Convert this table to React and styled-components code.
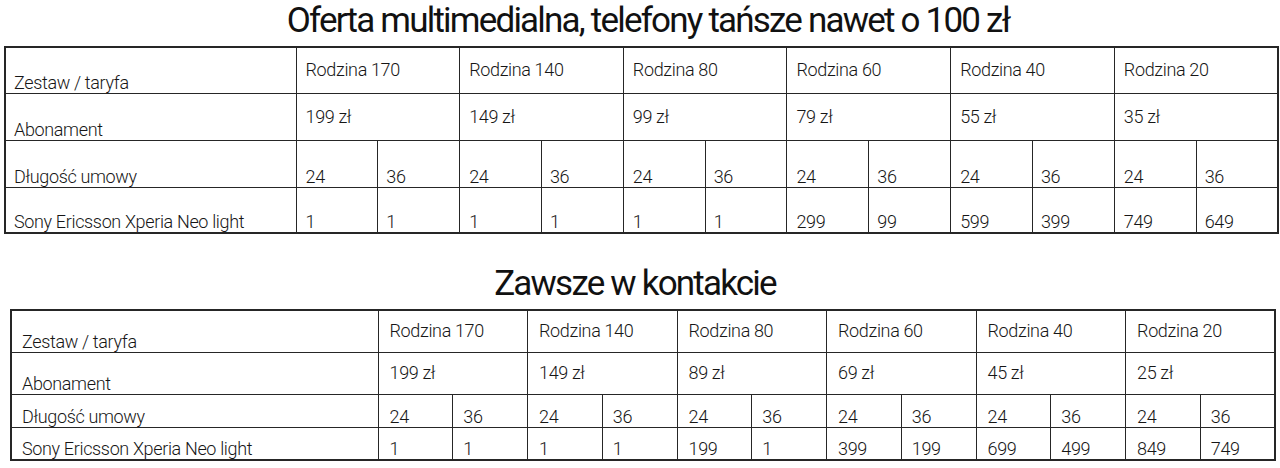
import React from 'react';
import styled, { createGlobalStyle } from 'styled-components';

const GlobalStyle = createGlobalStyle`
  html, body {
    margin: 0;
    padding: 0;
    background: #fff;
  }
  body {
    font-family: Roboto, 'Liberation Sans', Arial, sans-serif;
    color: #1a1a1a;
  }
`;

const Page = styled.div`
  width: 1280px;
  height: 468px;
  overflow: hidden;
  display: flex;
  flex-direction: column;
`;

const Section = styled.section`
  display: flex;
  flex-direction: column;
  padding-left: ${(p) => p.left}px;
  padding-top: ${(p) => p.top}px;
`;

const Title = styled.h2`
  margin: 0;
  height: ${(p) => p.h}px;
  font-family: Roboto, 'Liberation Sans', Arial, sans-serif;
  font-weight: 400;
  font-size: 35px;
  line-height: ${(p) => p.h - 4}px;
  letter-spacing: -1.8px;
  text-align: center;
  color: #111;
  transform: translateX(${(p) => p.shift}px);
`;

const Table = styled.table`
  width: ${(p) => p.width}px;
  border-collapse: collapse;
  table-layout: fixed;
  border: 2px solid #262626;
  font-size: 18px;
  font-weight: 300;
  letter-spacing: -0.35px;
  color: #161616;
`;

const Row = styled.tr`
  height: ${(p) => p.h}px;
`;

const Cell = styled.td`
  border: 1.5px solid #262626;
  padding: 0 0 ${(p) => (p.valign === 'bottom' ? 0 : 0)}px ${(p) => p.pad}px;
  vertical-align: ${(p) => p.valign};
  text-align: left;
  white-space: nowrap;
  overflow: hidden;
  line-height: 20px;
`;

const Label = styled(Cell)`
  vertical-align: bottom;
`;

const Pad = styled.div`
  padding-top: ${(p) => p.top}px;
`;

const groups = ['Rodzina 170', 'Rodzina 140', 'Rodzina 80', 'Rodzina 60', 'Rodzina 40', 'Rodzina 20'];

const tables = [
  {
    title: 'Oferta multimedialna, telefony tańsze nawet o 100 zł',
    titleH: 46,
    titleShift: 10,
    top: 0,
    left: 4,
    width: 1273,
    labelW: 291,
    pad: 8,
    rows: [46, 47, 47, 46],
    align: 'top',
    headPad: [12, 13],
    prices: ['199 zł', '149 zł', '99 zł', '79 zł', '55 zł', '35 zł'],
    phone: ['1', '1', '1', '1', '1', '1', '299', '99', '599', '399', '749', '649'],
  },
  {
    title: 'Zawsze w kontakcie',
    titleH: 46,
    titleShift: 0,
    top: 29,
    left: 10,
    width: 1264,
    labelW: 367,
    pad: 10,
    rows: [42, 42, 33, 33],
    align: 'middle',
    headPad: [0, 0],
    prices: ['199 zł', '149 zł', '89 zł', '69 zł', '45 zł', '25 zł'],
    phone: ['1', '1', '1', '1', '199', '1', '399', '199', '699', '499', '849', '749'],
  },
];

const PriceTable = ({ t }) => {
  const half = (t.width - t.labelW) / 12;
  return (
    <Section top={t.top} left={t.left}>
      <Title h={t.titleH} shift={t.titleShift - t.left}>
        {t.title}
      </Title>
      <Table width={t.width}>
        <colgroup>
          <col style={{ width: t.labelW }} />
          {groups.flatMap((g) => [
            <col key={g + 'a'} style={{ width: half }} />,
            <col key={g + 'b'} style={{ width: half }} />,
          ])}
        </colgroup>
        <tbody>
          <Row h={t.rows[0]}>
            <Label pad={t.pad}>Zestaw / taryfa</Label>
            {groups.map((g) => (
              <Cell key={g} colSpan={2} pad={t.pad + 1} valign={t.align}>
                <Pad top={t.headPad[0]}>{g}</Pad>
              </Cell>
            ))}
          </Row>
          <Row h={t.rows[1]}>
            <Label pad={t.pad}>Abonament</Label>
            {t.prices.map((p, i) => (
              <Cell key={i} colSpan={2} pad={t.pad + 1} valign={t.align}>
                <Pad top={t.headPad[1]}>{p}</Pad>
              </Cell>
            ))}
          </Row>
          <Row h={t.rows[2]}>
            <Label pad={t.pad}>Długość umowy</Label>
            {groups.flatMap((g) => [
              <Cell key={g + '24'} pad={t.pad + 1} valign="bottom">
                24
              </Cell>,
              <Cell key={g + '36'} pad={t.pad} valign="bottom">
                36
              </Cell>,
            ])}
          </Row>
          <Row h={t.rows[3]}>
            <Label pad={t.pad}>Sony Ericsson Xperia Neo light</Label>
            {t.phone.map((v, i) => (
              <Cell key={i} pad={i % 2 ? t.pad : t.pad + 1} valign="bottom">
                {v}
              </Cell>
            ))}
          </Row>
        </tbody>
      </Table>
    </Section>
  );
};

const App = () => (
  <Page>
    <GlobalStyle />
    {tables.map((t) => (
      <PriceTable key={t.title} t={t} />
    ))}
  </Page>
);

export default App;
